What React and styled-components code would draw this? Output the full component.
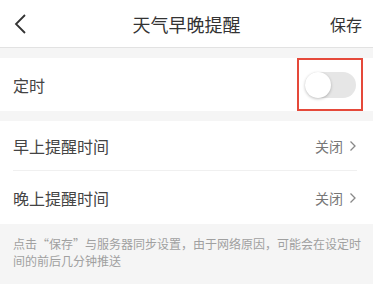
import React from "react";
import styled, { createGlobalStyle } from "styled-components";

const Global = createGlobalStyle`
  html, body { margin: 0; padding: 0; background: #f5f5f5; }
  body { font-family: "Noto Sans CJK SC", "Noto Sans", sans-serif; }
`;

const Page = styled.div`
  width: 373px;
  height: 284px;
  background: #f5f5f5;
  overflow: hidden;
`;

const Header = styled.div`
  height: 47px;
  background: #fff;
  border-bottom: 1px solid #e2e2e2;
  display: grid;
  grid-template-columns: 60px 1fr 60px;
  align-items: center;
`;

const Back = styled.div`
  padding-left: 13px;
  display: flex;
  align-items: center;
  height: 100%;
`;

const Title = styled.div`
  text-align: center;
  font-size: 18px;
  color: #333;
  line-height: 1;
`;

const Save = styled.div`
  text-align: right;
  padding-right: 11px;
  font-size: 16px;
  color: #333;
  line-height: 1;
`;

const Group = styled.div`
  background: #fff;
  margin-top: ${(p) => p.$gap}px;
`;

const Row = styled.div`
  height: ${(p) => p.$h}px;
  margin: 0 16px 0 13px;
  display: flex;
  align-items: center;
  justify-content: space-between;
  border-bottom: ${(p) => (p.$divider ? "1px solid #f0f0f0" : "none")};
`;

const Label = styled.div`
  font-size: 16px;
  color: #444;
`;

const Value = styled.div`
  display: flex;
  align-items: center;
  gap: 6px;
  font-size: 14px;
  color: #777;
`;

const Highlight = styled.div`
  width: 66px;
  height: 53px;
  box-sizing: border-box;
  border: 2.5px solid #e5493a;
  margin-right: -6px;
  display: flex;
  align-items: center;
  justify-content: center;
`;

const Track = styled.div`
  width: 51px;
  height: 26px;
  border-radius: 13px;
  background: #e6e6e6;
  position: relative;
`;

const Knob = styled.div`
  position: absolute;
  left: 0;
  top: 0;
  width: 26px;
  height: 26px;
  border-radius: 50%;
  background: #fff;
  box-shadow: 0 1px 3px rgba(0, 0, 0, 0.25);
`;

const Note = styled.div`
  padding: 11px 5px 0 13px;
  font-size: 12px;
  line-height: 17px;
  color: #a0a0a0;
`;

const Chevron = () => (
  <svg width="8" height="12" viewBox="0 0 8 12">
    <path d="M1.5 1.5 L6 6 L1.5 10.5" fill="none" stroke="#888" strokeWidth="1.3" />
  </svg>
);

export default function App() {
  return (
    <Page>
      <Global />
      <Header>
        <Back>
          <svg width="14" height="22" viewBox="0 0 14 22">
            <path d="M12 2 L3 11 L12 20" fill="none" stroke="#333" strokeWidth="1.8" />
          </svg>
        </Back>
        <Title>天气早晚提醒</Title>
        <Save>保存</Save>
      </Header>
      <Group $gap={10}>
        <Row $h={53}>
          <Label>定时</Label>
          <Highlight>
            <Track>
              <Knob />
            </Track>
          </Highlight>
        </Row>
      </Group>
      <Group $gap={10}>
        <Row $h={49} $divider>
          <Label>早上提醒时间</Label>
          <Value>
            关闭 <Chevron />
          </Value>
        </Row>
        <Row $h={53}>
          <Label>晚上提醒时间</Label>
          <Value>
            关闭 <Chevron />
          </Value>
        </Row>
      </Group>
      <Note>点击“保存”与服务器同步设置，由于网络原因，可能会在设定时间的前后几分钟推送</Note>
    </Page>
  );
}
